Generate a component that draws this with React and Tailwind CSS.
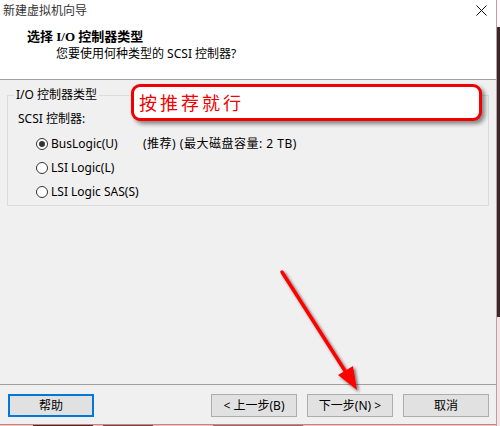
import React from "react";

const font = { fontFamily: '"Noto Sans", "Noto Sans CJK SC", sans-serif' };

const Radio = ({ checked, label, extra }) => (
	<div className="h-[24px] flex items-center pl-[28px]">
		<span className="w-[12px] h-[12px] rounded-full border border-[#333] bg-white flex items-center justify-center">
			{checked && <span className="w-[6px] h-[6px] rounded-full bg-[#333]" />}
		</span>
		<span className="ml-[3px] w-[92px] text-[12px] leading-[16px] text-black">{label}</span>
		{extra && <span className="text-[12px] leading-[16px] tracking-[0.5px] text-black">{extra}</span>}
	</div>
);

const Btn = ({ children, focused }) => (
	<button
		className={
			"w-[86px] h-[23px] bg-[#e1e1e1] text-[12px] leading-[16px] text-black flex items-center justify-center " +
			(focused ? "border-2 border-[#0078d7]" : "border border-[#adadad]")
		}
	>
		{children}
	</button>
);

const App = () => {
	return (
		<div className="w-[500px] h-[426px] flex overflow-hidden relative bg-[#f0f0f0]" style={font}>
			<div className="w-[496px] flex flex-col">
				{/* title bar */}
				<div className="h-[22px] bg-white flex items-center justify-between pl-[3px] pr-[9px]">
					<span className="text-[12px] leading-[16px] text-[#333]">新建虚拟机向导</span>
					<svg width="11" height="11" viewBox="0 0 11 11" className="mt-[-1px]">
						<path d="M0.5 0.5 L10.5 10.5 M10.5 0.5 L0.5 10.5" stroke="#111" strokeWidth="1" />
					</svg>
				</div>

				{/* header */}
				<div className="h-[57px] bg-white pt-[7px]">
					<div
						className="pl-[27px] text-[13px] leading-[16px] font-bold text-black"
						style={{ fontFamily: '"Liberation Serif", "Noto Sans CJK SC", serif' }}
					>
						选择 I/O 控制器类型
					</div>
					<div className="pl-[56px] mt-[1px] text-[12px] leading-[16px] text-black">
						您要使用何种类型的 SCSI 控制器?
					</div>
				</div>
				<div className="h-px bg-[#a0a0a0]" />

				{/* body */}
				<div className="h-[304px] bg-[#f0f0f0] relative px-[7px] pt-[7px]">
					<fieldset className="border border-[#dcdcdc] pb-[1px]">
						<legend className="ml-[6px] px-[2px] text-[12px] leading-[16px] text-black">I/O 控制器类型</legend>
						<div className="pl-[10px] mt-[8px] text-[12px] leading-[16px] text-black">SCSI 控制器:</div>
						<div className="mt-[5px] flex flex-col">
							<Radio checked label="BusLogic(U)" extra="(推荐) (最大磁盘容量: 2 TB)" />
							<Radio label="LSI Logic(L)" />
							<Radio label="LSI Logic SAS(S)" />
						</div>
					</fieldset>

					{/* callout */}
					<div className="absolute left-[131px] top-[4px] w-[351px] h-[37px] bg-white border-[3px] border-[#f00000] rounded-[9px] shadow-[3px_3px_4px_rgba(0,0,0,0.45)] flex items-center pl-[5px]">
						<span className="text-[18px] leading-[22px] tracking-[3px] text-[#f00000]">按推荐就行</span>
					</div>
				</div>
				<div className="h-px bg-[#a0a0a0]" />

				{/* buttons */}
				<div className="h-[39px] bg-[#f0f0f0] flex items-start justify-between pt-[9px] pl-[8px] pr-[7px]">
					<Btn focused>帮助</Btn>
					<div className="flex gap-[10px]">
						<Btn>&lt; 上一步(B)</Btn>
						<Btn>下一步(N) &gt;</Btn>
						<Btn>取消</Btn>
					</div>
				</div>
				<div className="h-px bg-[#e07a7a]" />
				<div className="h-px bg-[#cfcfcf] flex">
					<div className="ml-[33px] w-[60px] bg-[#333]" />
					<div className="ml-[10px] w-[50px] bg-[#555]" />
					<div className="ml-[60px] w-[90px] bg-[#777]" />
				</div>
			</div>

			{/* right edge */}
			<div className="w-px bg-[#d89494]" />
			<div className="w-[3px] flex flex-col">
				<div className="h-[27px] bg-white" />
				<div className="h-[290px] bg-[#2e2e2e]" />
				<div className="flex-1 bg-[#e8e8e8]" />
			</div>

			{/* arrow annotation */}
			<svg className="absolute inset-0 pointer-events-none" width="500" height="426" viewBox="0 0 500 426">
				<defs>
					<filter id="sh" x="-20%" y="-20%" width="140%" height="140%">
						<feDropShadow dx="2" dy="2" stdDeviation="1.5" floodColor="#000" floodOpacity="0.55" />
					</filter>
				</defs>
				<g filter="url(#sh)">
					<line x1="282" y1="272" x2="347" y2="374" stroke="#f00" strokeWidth="3.5" strokeLinecap="round" />
					<polygon points="357,390 338,375 353,366" fill="#f00" />
				</g>
			</svg>
		</div>
	);
};

export default App;
